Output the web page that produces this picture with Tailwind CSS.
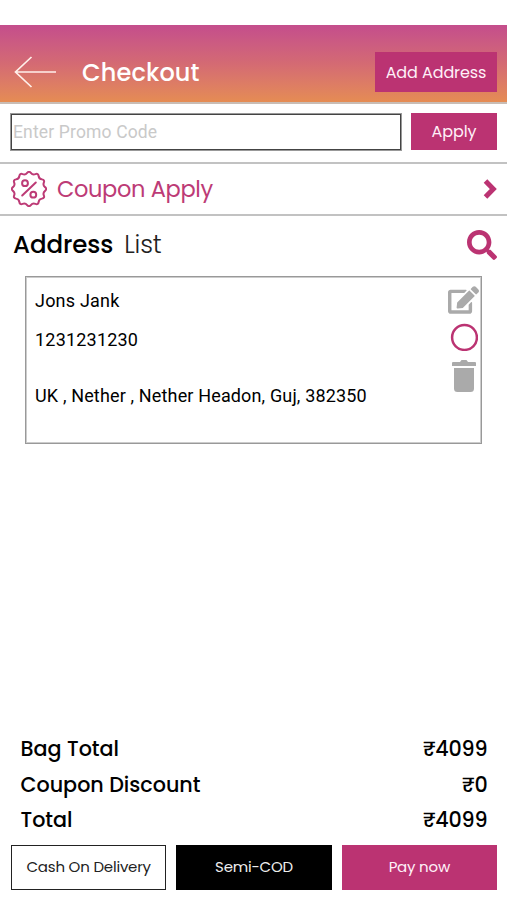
<!DOCTYPE html>
<html lang="en">
<head>
<meta charset="utf-8">
<title>Checkout</title>
<script src="https://cdn.jsdelivr.net/npm/@tailwindcss/browser@4"></script>
</head>
<body class="bg-white">
<div class="w-[507px] h-[900px] flex flex-col overflow-hidden bg-white pt-[25px] font-[Poppins,Inter,sans-serif] text-black whitespace-nowrap">
  <header class="h-[79px] shrink-0 flex items-center pt-[16px] pl-[14px] pr-[10px] border-b-2 border-[#c9bdb5] bg-linear-to-b from-[#c44d8c] via-[#d46a73] to-[#e58c53]">
    <svg class="w-[42px] h-[32px]" viewBox="0 0 42 32" fill="none" stroke="#fff0ea" stroke-width="1.7"><path d="M42 16H1.5M17.500 1L1.500 16l16 15"/></svg>
    <h1 class="ml-[26px] pt-[3px] text-[24px] font-medium text-white tracking-[0.150px]">Checkout</h1>
    <button class="ml-auto mt-px w-[122px] h-[40px] bg-[#bb3372] text-[#fff0f8] text-[16px] pt-px tracking-[-0.100px]">Add Address</button>
  </header>
  <section class="h-[58px] shrink-0 flex items-center pl-[11px] pr-[10px] pb-[3px]">
    <input class="w-[390px] h-[36px] border border-[#444] outline outline-[#999] pl-[1px] font-[Roboto,sans-serif] text-[17.5px] tracking-[0.150px] placeholder:text-[#c9c9c9]" placeholder="Enter Promo Code">
    <button class="ml-auto w-[86px] h-[37px] bg-[#bb3372] text-[#fff0f8] text-[16px] tracking-[-0.100px] pt-px">Apply</button>
  </section>
  <section class="h-[54px] shrink-0 flex items-center border-y-2 border-[#c2c2c2] pl-[11px] pr-[10px] text-[#bd3b76]">
    <svg class="w-[36px] h-[36px]" viewBox="-18 -18 36 36" fill="none" stroke="currentColor" stroke-width="2" stroke-linejoin="round" stroke-linecap="round">
      <path d="M1.840 -16.060Q3.680 -13.720 6.440 -14.830Q9.200 -15.930 9.620 -12.990Q10.040 -10.040 12.990 -9.620Q15.930 -9.200 14.830 -6.440Q13.720 -3.680 16.060 -1.840Q18.400 0 16.060 1.840Q13.720 3.680 14.830 6.440Q15.930 9.200 12.990 9.620Q10.040 10.040 9.620 12.990Q9.200 15.930 6.440 14.830Q3.680 13.720 1.840 16.060Q0 18.400 -1.840 16.060Q-3.680 13.720 -6.440 14.830Q-9.200 15.930 -9.620 12.990Q-10.040 10.040 -12.990 9.620Q-15.930 9.200 -14.830 6.440Q-13.720 3.680 -16.060 1.840Q-18.400 0 -16.060 -1.840Q-13.720 -3.680 -14.830 -6.440Q-15.930 -9.200 -12.990 -9.620Q-10.040 -10.040 -9.620 -12.990Q-9.200 -15.930 -6.440 -14.830Q-3.680 -13.720 -1.840 -16.060Q0 -18.400 1.840 -16.060Z"/>
      <path d="M6.800 -6.500L-6.800 6.500"/><circle cx="-4" cy="-5.800" r="2.900"/><circle cx="4.300" cy="5.700" r="2.900"/>
    </svg>
    <h2 class="ml-[10px] pt-[2px] text-[22.5px] tracking-[-0.350px]">Coupon Apply</h2>
    <svg class="ml-auto w-[14px] h-[20px]" viewBox="0 0 14 20" fill="none" stroke="#bb3372" stroke-width="5"><path d="M2.500 2l7.800 8L2.500 18"/></svg>
  </section>
  <section class="h-[60px] shrink-0 flex items-center pl-[13px] pr-[10px] pb-[2px]">
    <h2 class="text-[24.5px] font-medium tracking-[-0.100px]">Address</h2><span class="ml-[11px] text-[25px] tracking-[-0.200px] font-light text-[#222]">List</span>
    <svg class="ml-auto w-[30px] h-[30px]" viewBox="0 0 512 512" fill="#bb3372"><path d="M505 442.700L405.300 343c-4.500-4.500-10.600-7-17-7H372c27.600-35.300 44-79.700 44-128C416 93.100 322.900 0 208 0S0 93.100 0 208s93.100 208 208 208c48.300 0 92.700-16.400 128-44v16.300c0 6.400 2.500 12.500 7 17l99.700 99.700c9.400 9.400 24.600 9.400 33.900 0l28.300-28.300c9.400-9.400 9.400-24.600.1-34zM208 336c-70.700 0-128-57.200-128-128 0-70.700 57.200-128 128-128 70.700 0 128 57.200 128 128 0 70.700-57.200 128-128 128z"/></svg>
  </section>
  <article class="ml-[25px] w-[457px] h-[168px] shrink-0 flex justify-between border border-[#999] outline outline-[#ccc] -outline-offset-2 pl-[9px] pr-[2px] font-[Roboto,sans-serif] text-[18px]">
    <div class="flex flex-col leading-[24px] pt-[12px]">
      <p class="tracking-[0.2px]">Jons Jank</p>
      <p class="mt-[15px] tracking-[0.2px]">1231231230</p>
      <p class="mt-[32px] tracking-[0.150px]">UK , Nether , Nether Headon, Guj, 382350</p>
    </div>
    <div class="flex flex-col items-center pt-[9px]">
      <svg class="w-[31px] h-[28px]" viewBox="0 0 576 512" fill="#aaa"><path d="M402.600 83.200l90.200 90.200c3.800 3.800 3.800 10 0 13.800L274.400 405.600l-92.800 10.300c-12.400 1.400-22.900-9.100-21.500-21.500l10.300-92.800L388.800 83.200c3.800-3.800 10-3.800 13.800 0zm162-22.900l-48.800-48.800c-15.200-15.200-39.900-15.200-55.200 0l-35.400 35.400c-3.800 3.800-3.800 10 0 13.800l90.200 90.200c3.800 3.800 10 3.800 13.800 0l35.400-35.400c15.200-15.300 15.200-40 0-55.200zM384 346.200V448H64V128h229.800c3.200 0 6.200-1.300 8.500-3.500l40-40c7.600-7.600 2.200-20.500-8.500-20.500H48C21.500 64 0 85.500 0 112v352c0 26.500 21.500 48 48 48h352c26.500 0 48-21.500 48-48V306.200c0-10.700-12.900-16-20.500-8.500l-40 40c-2.200 2.300-3.500 5.300-3.500 8.500z"/></svg>
      <svg class="mt-[9px] w-[28px] h-[28px]" viewBox="0 0 28 28" fill="none" stroke="#bb3372" stroke-width="2.500"><circle cx="14.500" cy="14.500" r="12.400"/></svg>
      <svg class="mt-[9px] w-[24px] h-[32px]" viewBox="0 0 24 32" fill="#aaa"><path d="M0 3q0-1 1-1H8L9.500 0h5L16 2h7q1 0 1 1v3H0zM2 8H22V28.500q0 3.500-3.500 3.500H5.500Q2 32 2 28.500z"/></svg>
    </div>
  </article>
  <dl class="mt-auto pl-[20.5px] pr-[19.5px] text-[20.7px] font-medium">
    <div class="h-[36px] flex items-center justify-between"><dt>Bag Total</dt><dd class="tracking-[-0.200px]">₹4099</dd></div>
    <div class="h-[35px] flex items-center justify-between"><dt>Coupon Discount</dt><dd class="tracking-[-0.200px]">₹0</dd></div>
    <div class="h-[36px] flex items-center justify-between"><dt>Total</dt><dd class="tracking-[-0.200px]">₹4099</dd></div>
  </dl>
  <footer class="mt-[7px] mb-[10px] h-[45px] shrink-0 grid grid-cols-3 gap-[10px] pl-[11px] pr-[10px] text-[15px] tracking-[-0.200px]">
    <button class="border-[1.5px] border-[#222] text-[#222]">Cash On Delivery</button>
    <button class="bg-black text-[#eee]">Semi-COD</button>
    <button class="bg-[#bb3372] text-[#fff0f8]">Pay now</button>
  </footer>
</div>
</body>
</html>
